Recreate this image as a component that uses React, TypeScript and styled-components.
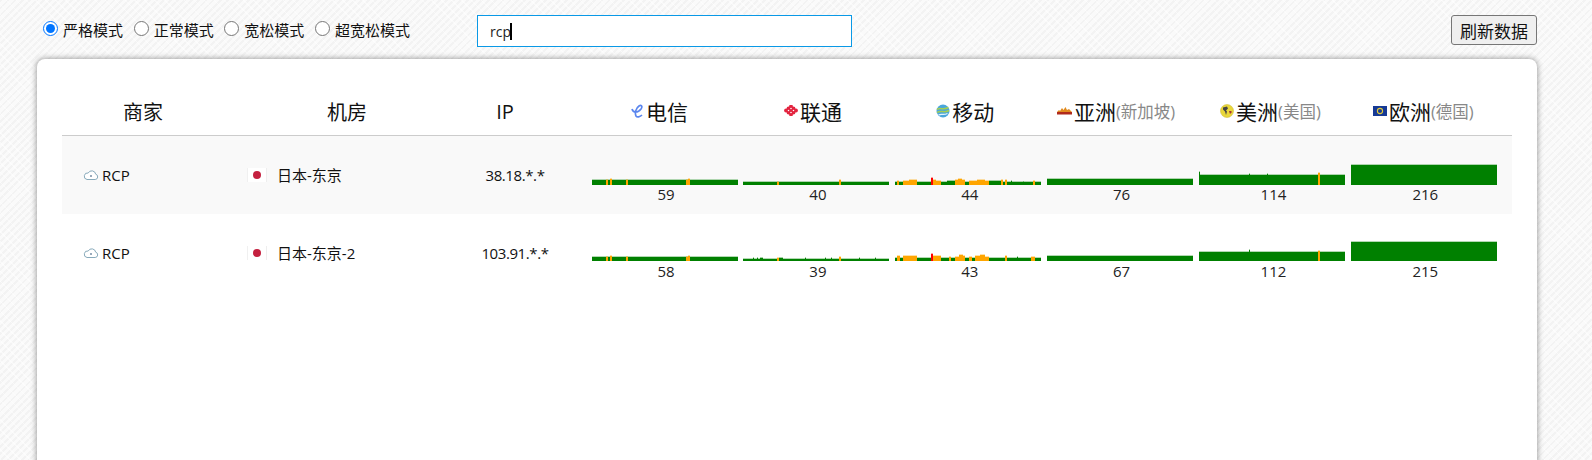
import React from "react";
import styled, { createGlobalStyle } from "styled-components";

const Global = createGlobalStyle`
  html, body { margin: 0; padding: 0; height: 460px; overflow: hidden; }
  body {
    font-family: "Open Sans", "Noto Sans CJK SC", sans-serif;
    color: #111;
    background-color: #f8f8f8;
    background-image:
      repeating-linear-gradient(45deg, rgba(255, 255, 255, 0.5) 0 1px, transparent 1px 7px),
      repeating-linear-gradient(135deg, #f3f3f3 0 2px, #fafafa 2px 5px);
  }
`;
const Page = styled.div`
  width: 1592px;
  height: 460px;
  overflow: hidden;
`;
const Toolbar = styled.div`
  display: flex;
  align-items: flex-start;
  height: 59px;
  padding: 15px 55px 0 43px;
  box-sizing: border-box;
`;
const Modes = styled.div`
  display: flex;
  width: 434px;
  gap: 10.67px;
  padding-top: 5px;
`;
const Mode = styled.label`
  display: flex;
  align-items: flex-start;
  font-size: 15px;
  line-height: 20px;
  gap: 5px;
`;
const Radio = styled.input`
  margin: 1px 0 0;
  width: 15px;
  height: 15px;
`;
const SearchWrap = styled.div`
  position: relative;
  width: 375px;
  height: 32px;
`;
const Search = styled.input`
  width: 100%;
  height: 100%;
  box-sizing: border-box;
  border: 1px solid #0a99e6;
  outline: none;
  background: #fff;
  padding: 0 12px;
  font: 14px "Open Sans", sans-serif;
  color: #222;
`;
const Caret = styled.span`
  position: absolute;
  left: 33px;
  top: 8px;
  width: 2px;
  height: 17px;
  background: #000;
`;
const Refresh = styled.button`
  margin-left: auto;
  width: 86px;
  height: 30px;
  padding: 0;
  background: #efefef;
  border: 1px solid #767676;
  border-radius: 3px;
  font: 17px "Open Sans", "Noto Sans CJK SC", sans-serif;
  color: #111;
`;
const Card = styled.div`
  margin-left: 37px;
  width: 1500px;
  height: 460px;
  box-sizing: border-box;
  background: #fff;
  border-radius: 8px;
  box-shadow: 0 0 6px rgba(0, 0, 0, 0.45);
  padding: 29px 25px 0;
`;
const HeaderRow = styled.div`
  display: flex;
  align-items: center;
  height: 47px;
  border-bottom: 1px solid #ccc;
  font-size: 20px;
`;
const HeadCell = styled.div<{ $w: number }>`
  width: ${(p) => p.$w}px;
  flex: none;
  text-align: center;
`;
const Charts = styled.div`
  margin-left: auto;
  margin-right: 12.3px;
  width: 911px;
  display: grid;
  grid-template-columns: repeat(6, 1fr);
`;
const HeadChart = styled.div<{ $pr: number }>`
  display: flex;
  justify-content: center;
  align-items: center;
  white-space: nowrap;
  font-size: 21px;
  padding-right: ${(p) => p.$pr}px;
  margin-top: -2px;
`;
const Sub = styled.span`
  font-size: 16.5px;
  color: #888;
`;
const LogoBox = styled.span`
  display: inline-flex;
  margin-right: 2px;
`;
const Row = styled.div<{ $odd?: boolean }>`
  display: flex;
  height: 78px;
  font-size: 15px;
  background: ${(p) => (p.$odd ? "#f9f9f9" : "#fff")};
  align-items: flex-start;
`;
const Merchant = styled.div`
  width: 162px;
  flex: none;
  box-sizing: border-box;
  padding: 29px 0 0 21px;
  display: flex;
  align-items: center;
  gap: 3px;
  line-height: 20px;
`;
const Room = styled.div`
  width: 246px;
  flex: none;
  box-sizing: border-box;
  padding: 29px 0 0 23px;
  display: flex;
  align-items: center;
  gap: 10px;
  line-height: 20px;
`;
const Ip = styled.div`
  width: 90px;
  flex: none;
  text-align: center;
  padding-top: 29px;
  line-height: 20px;
  letter-spacing: -0.4px;
`;
const ChartCell = styled.div<{ $top: number }>`
  display: flex;
  flex-direction: column;
  align-items: center;
  padding-top: ${(p) => p.$top}px;
`;
const Value = styled.div<{ $lift: number }>`
  line-height: 20px;
  color: #222;
  margin-left: 3px;
  margin-top: -${(p) => p.$lift}px;
`;

type Seg = [number, number, number, string?];
const O = "#ffa500";
const G = "#008000";
const R = "#ff0000";

function Bars({ base, segs = [] }: { base: number; segs?: Seg[] }) {
  const H = 30;
  return (
    <svg width={146} height={H} viewBox={`0 0 146 ${H}`} style={{ display: "block" }} shapeRendering="crispEdges">
      <rect x={0} y={H - base - 1} width={146} height={1} fill={G} opacity={0.3} />
      <rect x={0} y={H - base} width={146} height={base} fill={G} />
      {segs.map(([x, w, h, c], i) => (
        <g key={i}>
          <rect x={x} y={H - h - 1} width={w} height={1} fill={c || O} opacity={0.35} />
          <rect x={x} y={H - h} width={w} height={h} fill={c || O} />
        </g>
      ))}
    </svg>
  );
}

const tel = (base: number): Seg[] => [
  [14, 2, base, O], [18, 2, base + 1, O], [34, 2, base, O], [94, 4, base, O], [96, 2, base + 1, O],
];
const mob1: Seg[] = [
  [2, 2, 4], [8, 6, 4], [14, 8, 5], [36, 2, 7, R], [38, 3, 5], [41, 5, 4], [52, 8, 4, G],
  [60, 3, 5], [63, 4, 6], [67, 3, 5], [74, 8, 4], [82, 4, 5], [86, 4, 5], [90, 4, 4], [94, 12, 4, G],
  [106, 2, 5], [110, 2, 5], [116, 1, 4, G], [128, 1, 3, G], [138, 2, 4],
];
const mob2: Seg[] = [
  [2, 3, 5], [8, 14, 5], [36, 2, 7, R], [38, 8, 5], [54, 2, 4], [60, 4, 4], [64, 4, 6], [68, 2, 5],
  [74, 3, 4], [80, 5, 5], [85, 5, 6], [90, 4, 4], [110, 2, 5], [122, 1, 4, G], [136, 4, 4],
];
const sparks39: Seg[] = [
  [10, 1, 3, G], [14, 1, 3, G], [17, 3, 3, G], [34, 2, 3], [36, 4, 3, G], [62, 1, 3, G],
  [82, 1, 3, G], [88, 1, 3, G], [96, 2, 4], [116, 1, 3, G], [132, 1, 3, G],
];
const r1 = [
  { v: 59, base: 5, segs: tel(5) },
  { v: 40, base: 3, segs: [[34, 2, 3], [96, 2, 5]] as Seg[] },
  { v: 44, base: 3, segs: mob1 },
  { v: 76, base: 6 },
  { v: 114, base: 10, segs: [[0, 1, 13, G], [50, 1, 11, G], [68, 1, 11, G], [119, 2, 12]] as Seg[] },
  { v: 216, base: 20 },
];
const r2 = [
  { v: 58, base: 4, segs: tel(4) },
  { v: 39, base: 2, segs: sparks39 },
  { v: 43, base: 3, segs: mob2 },
  { v: 67, base: 5 },
  { v: 112, base: 9, segs: [[50, 1, 11, G], [119, 2, 10]] as Seg[] },
  { v: 215, base: 19 },
];

const Cloud = () => (
  <svg width="16" height="12" viewBox="0 0 16 12">
    <path d="M4 10.500h8.200a2.700 2.700 0 0 0 .5-5.300A4 4 0 0 0 5.200 4 3.300 3.300 0 0 0 4 10.500z" fill="#fff" stroke="#88aabb" strokeWidth="1" />
    <path d="M7 6h2v2H7z" fill="#9ab" />
  </svg>
);
const JapanFlag = () => (
  <svg width="20" height="14" viewBox="0 0 20 14">
    <rect width="20" height="14" fill="#fff" />
    <rect x="0" y="0" width="1" height="14" fill="#f0f0f0" />
    <rect x="19" y="0" width="1" height="14" fill="#eee" />
    <circle cx="10" cy="7" r="4" fill="#c4203f" />
  </svg>
);
const Telecom = () => (
  <LogoBox>
    <svg width="14" height="14" viewBox="0 0 14 14">
      <path d="M2 5C3 9 8 9 11 5 13 2 11 .8 9 2 6 4 4.500 9 6 12 7 13.500 10 13 12 11" fill="none" stroke="#5b86ee" strokeWidth="1.700" />
    </svg>
  </LogoBox>
);
const Unicom = () => (
  <LogoBox>
    <svg width="14" height="11" viewBox="0 0 14 11">
      {[[7,1.500],[4.500,3.500],[9.500,3.500],[2,5.500],[7,5.500],[12,5.500],[4.500,7.500],[9.500,7.500],[7,9.500]].map(([x,y],i)=>(
        <circle key={i} cx={x} cy={y} r="1.900" fill="#e3243f" />
      ))}
      {[[7,3.500],[4.500,5.500],[9.500,5.500],[7,7.500]].map(([x,y],i)=>(
        <circle key={i} cx={x} cy={y} r="0.700" fill="#fff" />
      ))}
    </svg>
  </LogoBox>
);
const Mobile = () => (
  <LogoBox>
    <svg width="14" height="14" viewBox="0 0 14 14">
      <circle cx="7" cy="7" r="6.500" fill="#4aa6dc" />
      <path d="M1 5.500c3-2.500 6 1 11.500-2M1 8.500c4-3 7 1 12-2" fill="none" stroke="#a5cf52" strokeWidth="1.500" />
      <path d="M2.500 11c3-1.500 5 .5 9-1.500" fill="none" stroke="#e6f4fb" strokeWidth="1.200" />
    </svg>
  </LogoBox>
);
const Asia = () => (
  <LogoBox>
    <svg width="15" height="10" viewBox="0 0 15 10">
      <path d="M0 6l2-2 1 1 2-3 1.500 2 2-3 1.500 3 2-1 3 3v2H0z" fill="#e08a1e" />
      <rect x="0" y="6" width="15" height="2.500" fill="#b02a1c" />
    </svg>
  </LogoBox>
);
const America = () => (
  <LogoBox>
    <svg width="14" height="14" viewBox="0 0 14 14">
      <circle cx="7" cy="7" r="6.500" fill="#e9d73a" stroke="#c9b52a" strokeWidth="0.500" />
      <path d="M3 3.500l4-1 1 2-2 2 1 1-1 3.500-1-3.500-2-2z" fill="#444" />
      <path d="M9 7h2.500v1.500L10 10z" fill="#a33" />
    </svg>
  </LogoBox>
);
const Europe = () => (
  <LogoBox>
    <svg width="14" height="10" viewBox="0 0 14 10">
      <rect width="14" height="10" fill="#163a94" />
      <circle cx="7" cy="5" r="2.600" fill="none" stroke="#e2c93a" strokeWidth="1.100" />
    </svg>
  </LogoBox>
);

const heads: { logo: React.ReactNode; name: string; sub?: string; pr: number }[] = [
  { logo: <Telecom />, name: "电信", pr: 11 },
  { logo: <Unicom />, name: "联通", pr: 7 },
  { logo: <Mobile />, name: "移动", pr: 6 },
  { logo: <Asia />, name: "亚洲", sub: "(新加坡)", pr: 8 },
  { logo: <America />, name: "美洲", sub: "(美国)", pr: 3 },
  { logo: <Europe />, name: "欧洲", sub: "(德国)", pr: 1 },
];

function DataRow({ odd, room, ip, data, top, lift }: { odd?: boolean; room: string; ip: string; data: typeof r1; top: number; lift: number }) {
  return (
    <Row $odd={odd}>
      <Merchant><Cloud />RCP</Merchant>
      <Room><JapanFlag />{room}</Room>
      <Ip>{ip}</Ip>
      <Charts>
        {data.map((d, i) => (
          <ChartCell key={i} $top={top}>
            <Bars base={d.base} segs={d.segs} />
            <Value $lift={lift}>{d.v}</Value>
          </ChartCell>
        ))}
      </Charts>
    </Row>
  );
}

export default function App() {
  return (
    <Page>
      <Global />
      <Toolbar>
        <Modes>
          <Mode><Radio type="radio" name="mode" defaultChecked />严格模式</Mode>
          <Mode><Radio type="radio" name="mode" />正常模式</Mode>
          <Mode><Radio type="radio" name="mode" />宽松模式</Mode>
          <Mode><Radio type="radio" name="mode" />超宽松模式</Mode>
        </Modes>
        <SearchWrap>
          <Search value="rcp" readOnly />
          <Caret />
        </SearchWrap>
        <Refresh>刷新数据</Refresh>
      </Toolbar>
      <Card>
        <HeaderRow>
          <HeadCell $w={162}>商家</HeadCell>
          <HeadCell $w={246}>机房</HeadCell>
          <HeadCell $w={70}>IP</HeadCell>
          <Charts>
            {heads.map((h) => (
              <HeadChart key={h.name} $pr={h.pr}>
                {h.logo}
                {h.name}
                {h.sub && <Sub>{h.sub}</Sub>}
              </HeadChart>
            ))}
          </Charts>
        </HeaderRow>
        <DataRow odd room="日本-东京" ip="38.18.*.*" data={r1} top={19} lift={1} />
        <DataRow room="日本-东京-2" ip="103.91.*.*" data={r2} top={17} lift={0} />
      </Card>
    </Page>
  );
}
